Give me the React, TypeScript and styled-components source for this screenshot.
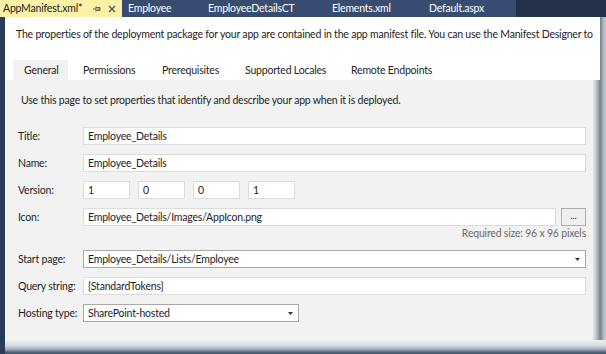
import React from 'react'
import styled, { createGlobalStyle } from 'styled-components'

const GlobalStyle = createGlobalStyle`
  html, body {
    margin: 0;
    padding: 0;
    width: 606px;
    height: 354px;
    overflow: hidden;
    background: #f2f2f2;
  }
  body {
    font-family: Lato, 'Open Sans', sans-serif;
    font-size: 10.5px;
    letter-spacing: -0.2px;
    color: #1e1e1e;
  }
`

const Window = styled.div`
  width: 606px;
  height: 354px;
  display: flex;
  flex-direction: column;
`

const DocTabBar = styled.div`
  height: 17px;
  flex-shrink: 0;
  display: flex;
  background: #23314b;
`

const DocTab = styled.div<{ $active?: boolean; $width: number }>`
  width: ${(p) => p.$width}px;
  box-sizing: border-box;
  padding-left: ${(p) => (p.$active ? 3 : 6)}px;
  display: flex;
  align-items: center;
  font-size: 10.5px;
  line-height: 17px;
  white-space: nowrap;
  background: ${(p) => (p.$active ? '#fbf1a7' : '#374c70')};
  color: ${(p) => (p.$active ? '#1e1e1e' : '#ffffff')};
`

const TabTitle = styled.span`
  flex: 1;
`

const TabIcon = styled.svg`
  width: 10px;
  height: 10px;
  margin-right: 5px;
  flex-shrink: 0;
`

const Frame = styled.div`
  flex: 1;
  display: flex;
  min-height: 0;
`

const LeftRail = styled.div`
  width: 5px;
  background: #2b3c5a;
  flex-shrink: 0;
`

const Main = styled.div`
  flex: 1;
  display: flex;
  flex-direction: column;
  min-width: 0;
`

const Surface = styled.div`
  flex: 1;
  display: flex;
  min-height: 0;
`

const Designer = styled.div`
  flex: 1;
  display: flex;
  flex-direction: column;
  min-width: 0;
`

const RightEdge = styled.div`
  width: 13px;
  flex-shrink: 0;
  background:
    linear-gradient(#ffffff, #ffffff) left top / 7px 63px no-repeat,
    linear-gradient(90deg, #e4e7ea 0%, #b3bcc4 30%, #75838f 55%, #aab3bc 80%, #c9cfd5 100%);
`

const Header = styled.div`
  height: 63px;
  flex-shrink: 0;
  background: #ffffff;
  display: flex;
  flex-direction: column;
`

const Description = styled.div`
  padding: 10px 0 0 11px;
  line-height: 14px;
  white-space: nowrap;
  overflow: hidden;
`

const PageTabs = styled.div`
  margin-top: auto;
  display: flex;
  padding-left: 8px;
  height: 20px;
`

const PageTab = styled.div<{ $active?: boolean; $width?: number }>`
  width: ${(p) => (p.$width ? `${p.$width}px` : 'auto')};
  box-sizing: border-box;
  padding-left: 11px;
  margin-right: 4px;
  line-height: 20px;
  white-space: nowrap;
  background: ${(p) => (p.$active ? '#f2f2f2' : 'transparent')};
`

const Panel = styled.div`
  flex: 1;
  background: #f2f2f2;
  padding: 13px 7px 0 13px;
  display: flex;
  flex-direction: column;
`

const Intro = styled.div`
  line-height: 14px;
  padding-left: 3px;
  margin-bottom: 20px;
  white-space: nowrap;
`

const Form = styled.div`
  display: flex;
  flex-direction: column;
  gap: 9px;
`

const FieldGroup = styled.div`
  display: flex;
  flex-direction: column;
`

const Row = styled.div`
  display: flex;
  align-items: center;
  height: 18px;
`

const Label = styled.div`
  width: 65px;
  flex-shrink: 0;
  white-space: nowrap;
`

const TextBox = styled.div<{ $width?: number; $gap?: number }>`
  ${(p) => (p.$width ? `width: ${p.$width}px;` : 'flex: 1;')}
  margin-right: ${(p) => p.$gap ?? 0}px;
  height: 18px;
  box-sizing: border-box;
  border: 1px solid #dcdcdc;
  background: #ffffff;
  padding-left: 4px;
  line-height: 16px;
  white-space: nowrap;
  overflow: hidden;
`

const DropDown = styled.div<{ $width?: number }>`
  ${(p) => (p.$width ? `width: ${p.$width}px;` : 'flex: 1;')}
  height: 18px;
  box-sizing: border-box;
  border: 1px solid #a9a9a9;
  background: #ffffff;
  padding: 0 4px;
  display: flex;
  align-items: center;
  line-height: 16px;
`

const DropValue = styled.span`
  flex: 1;
  white-space: nowrap;
`

const Arrow = styled.svg`
  width: 5px;
  height: 3px;
  margin-right: 1px;
`

const BrowseButton = styled.div`
  width: 25px;
  height: 18px;
  box-sizing: border-box;
  border: 1px solid #adadad;
  background: #efefef;
  text-align: center;
  font-size: 9px;
  line-height: 14px;
  color: #333333;
`

const Hint = styled.div`
  line-height: 15px;
  text-align: right;
  color: #6b6b6b;
`

const BottomEdge = styled.div`
  height: 14px;
  flex-shrink: 0;
  background: linear-gradient(#eef0f2 0%, #d3dae1 40%, #a4b0bc 65%, #5d6d80 85%, #3f4f64 100%);
`

const DropArrow = () => (
  <Arrow viewBox="0 0 5 3">
    <path d="M0 0h5L2.5 3z" fill="#333333" />
  </Arrow>
)

const docTabs = [
  { title: 'Employee', width: 80 },
  { title: 'EmployeeDetailsCT', width: 124 },
  { title: 'Elements.xml', width: 97 },
  { title: 'Default.aspx', width: 93 },
]

const versionParts = ['1', '0', '0', '1']

export default function App() {
  return (
    <Window>
      <GlobalStyle />
      <DocTabBar>
        <DocTab $active $width={122}>
          <TabTitle>AppManifest.xml*</TabTitle>
          <TabIcon viewBox="0 0 10 10">
            <path d="M1 5h3M4 2.5v5M4 3.5h4v3H4M5 5h3" stroke="#5d6b55" strokeWidth="1" fill="none" />
          </TabIcon>
          <TabIcon viewBox="0 0 10 10">
            <path d="M2 2l6 6M8 2L2 8" stroke="#555555" strokeWidth="1.3" fill="none" />
          </TabIcon>
        </DocTab>
        {docTabs.map((t) => (
          <DocTab key={t.title} $width={t.width}>
            {t.title}
          </DocTab>
        ))}
      </DocTabBar>

      <Frame>
        <LeftRail />
        <Main>
          <Surface>
            <Designer>
              <Header>
                <Description>
                  The properties of the deployment package for your app are contained in the app manifest file. You can
                  use the Manifest Designer to set
                </Description>
                <PageTabs>
                  <PageTab $active $width={55}>General</PageTab>
                  <PageTab $width={75}>Permissions</PageTab>
                  <PageTab $width={79}>Prerequisites</PageTab>
                  <PageTab $width={102}>Supported Locales</PageTab>
                  <PageTab>Remote Endpoints</PageTab>
                </PageTabs>
              </Header>

              <Panel>
                <Intro>Use this page to set properties that identify and describe your app when it is deployed.</Intro>
                <Form>
                  <Row>
                    <Label>Title:</Label>
                    <TextBox>Employee_Details</TextBox>
                  </Row>
                  <Row>
                    <Label>Name:</Label>
                    <TextBox>Employee_Details</TextBox>
                  </Row>
                  <Row>
                    <Label>Version:</Label>
                    {versionParts.map((v, i) => (
                      <TextBox key={i} $width={47} $gap={i < 3 ? 8 : 0}>
                        {v}
                      </TextBox>
                    ))}
                  </Row>
                  <FieldGroup>
                    <Row>
                      <Label>Icon:</Label>
                      <TextBox $gap={5}>Employee_Details/Images/AppIcon.png</TextBox>
                      <BrowseButton>...</BrowseButton>
                    </Row>
                    <Hint>Required size: 96 x 96 pixels</Hint>
                  </FieldGroup>
                  <Row>
                    <Label>Start page:</Label>
                    <DropDown>
                      <DropValue>Employee_Details/Lists/Employee</DropValue>
                      <DropArrow />
                    </DropDown>
                  </Row>
                  <Row>
                    <Label>Query string:</Label>
                    <TextBox>{'{StandardTokens}'}</TextBox>
                  </Row>
                  <Row>
                    <Label>Hosting type:</Label>
                    <DropDown $width={216}>
                      <DropValue>SharePoint-hosted</DropValue>
                      <DropArrow />
                    </DropDown>
                  </Row>
                </Form>
              </Panel>
            </Designer>
            <RightEdge />
          </Surface>
          <BottomEdge />
        </Main>
      </Frame>
    </Window>
  )
}
